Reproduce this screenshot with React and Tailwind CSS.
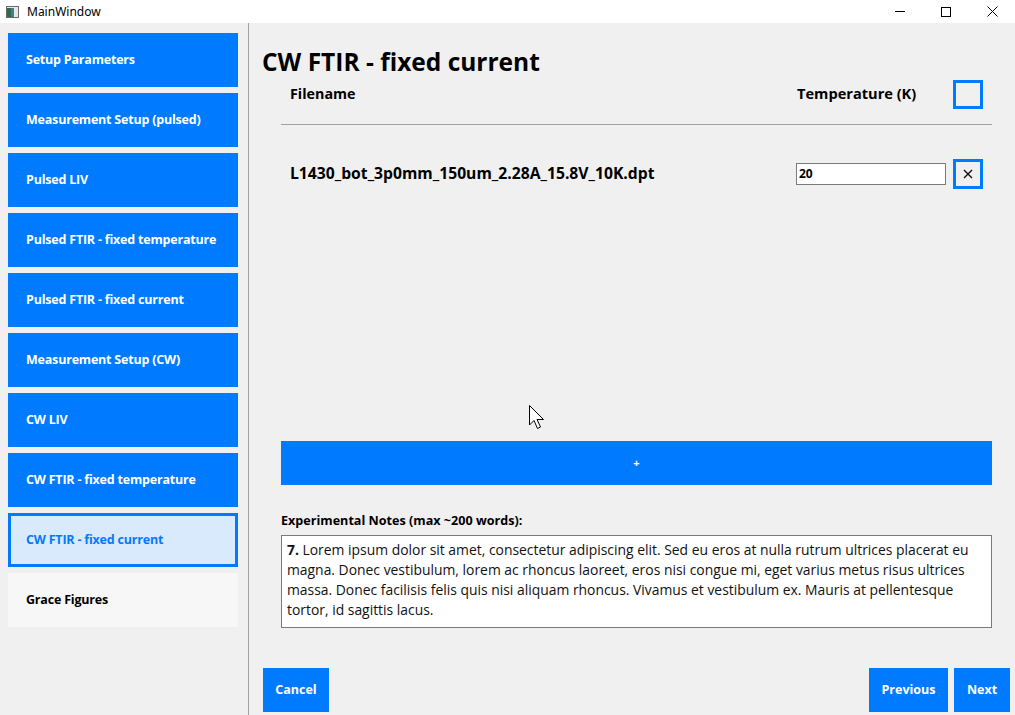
import React from "react";

const font = { fontFamily: '"Open Sans", "Noto Sans", sans-serif' };

const items = [
  "Setup Parameters",
  "Measurement Setup (pulsed)",
  "Pulsed LIV",
  "Pulsed FTIR - fixed temperature",
  "Pulsed FTIR - fixed current",
  "Measurement Setup (CW)",
  "CW LIV",
  "CW FTIR - fixed temperature",
];

function SideButton({ label }) {
  return (
    <div className="h-[54px] w-[230px] bg-[#007bff] flex items-center pl-[18px] text-white font-bold text-[12.5px] tracking-[-0.2px]">
      {label}
    </div>
  );
}

export default function App() {
  return (
    <div className="relative w-[1015px] h-[715px] bg-[#f0f0f0] flex flex-col overflow-hidden" style={font}>
      {/* title bar */}
      <div className="h-[23px] bg-white flex items-center shrink-0">
        <svg width="13" height="12" viewBox="0 0 13 12" className="ml-[6px]">
          <rect x="0.5" y="0.5" width="12" height="11" fill="#e8e8e8" stroke="#6b6b6b" />
          <rect x="1" y="2" width="7" height="9" fill="#3f7f8f" />
          <rect x="1" y="2" width="4" height="9" fill="#2e6b4a" />
        </svg>
        <span className="ml-[8px] text-[12px] text-black" style={{ fontFamily: '"Noto Sans", sans-serif' }}>MainWindow</span>
        <div className="ml-auto flex items-center h-full">
          <div className="w-[46px] h-full flex items-center justify-center">
            <div className="w-[10px] h-px bg-black" />
          </div>
          <div className="w-[46px] h-full flex items-center justify-center">
            <div className="w-[10px] h-[10px] border border-black" />
          </div>
          <div className="w-[46px] h-full flex items-center justify-center">
            <svg width="11" height="11" viewBox="0 0 11 11">
              <path d="M0.5 0.5 L10.5 10.5 M10.5 0.5 L0.5 10.5" stroke="black" strokeWidth="1" />
            </svg>
          </div>
        </div>
      </div>

      <div className="flex flex-1 min-h-0">
        {/* sidebar */}
        <div className="w-[249px] border-r border-[#a0a0a0] pt-[10px] pl-[8px] flex flex-col gap-[6px] shrink-0">
          {items.map((l) => (
            <SideButton key={l} label={l} />
          ))}
          <div className="h-[54px] w-[230px] bg-[#d9eafc] border-[3px] border-[#007bff] flex items-center pl-[15px] text-[#007bff] font-bold text-[12.5px] tracking-[-0.2px]">
            CW FTIR - fixed current
          </div>
          <div className="h-[54px] w-[230px] bg-[#f7f7f7] flex items-center pl-[18px] text-black font-bold text-[12.5px] tracking-[-0.2px]">
            Grace Figures
          </div>
        </div>

        {/* main */}
        <div className="flex-1 flex flex-col">
          <div className="mt-[23px] h-[32px] pl-[13px] flex items-center text-[24.5px] font-bold text-black">
            CW FTIR - fixed current
          </div>

          <div className="ml-[32px] mr-[23px] flex flex-col">
            {/* header */}
            <div className="h-[30px] flex items-center mt-[1px]">
              <div className="flex-1 pl-[9px] font-bold text-[14.3px] text-black">Filename</div>
              <div className="w-[150px] pl-[1px] font-bold text-[14.6px] text-black whitespace-nowrap">Temperature (K)</div>
              <div className="ml-[7px] w-[30px] h-[29px] border-[3px] border-[#007bff]" />
              <div className="w-[9px]" />
            </div>
            <div className="mt-[15px] h-px bg-[#a0a0a0]" />

            {/* file row */}
            <div className="mt-[34px] h-[30px] flex items-center">
              <div className="flex-1 pl-[9px] font-bold text-[15.7px] text-black whitespace-nowrap">
                L1430_bot_3p0mm_150um_2.28A_15.8V_10K.dpt
              </div>
              <div className="w-[150px] h-[22px] bg-white border border-[#7a7a7a] flex items-center pl-[2px] font-bold text-[12px] text-black">
                20
              </div>
              <div className="ml-[7px] w-[30px] h-[30px] border-[3px] border-[#007bff] flex items-center justify-center">
                <svg width="10" height="10" viewBox="0 0 10 10">
                  <path d="M1 1 L9 9 M9 1 L1 9" stroke="#111" strokeWidth="1.4" />
                </svg>
              </div>
              <div className="w-[9px]" />
            </div>

            {/* plus */}
            <div className="mt-[252px] h-[44px] bg-[#007bff] flex items-center justify-center text-white text-[11px] font-bold">
              +
            </div>

            <div className="mt-[28px] h-[16px] flex items-center font-bold text-[12.6px] text-black whitespace-nowrap">
              Experimental Notes (max ~200 words):
            </div>

            <div className="mt-[6px] h-[93px] bg-white border border-[#7a7a7a] pl-[5px] pr-[12px] pt-[4px] text-[13.9px] leading-[20px] text-[#111]">
              <span className="font-bold">7.</span> Lorem ipsum dolor sit amet, consectetur adipiscing elit. Sed eu eros at nulla rutrum ultrices placerat eu magna. Donec vestibulum, lorem ac rhoncus laoreet, eros nisi congue mi, eget varius metus risus ultrices massa. Donec facilisis felis quis nisi aliquam rhoncus. Vivamus et vestibulum ex. Mauris at pellentesque tortor, id sagittis lacus.
            </div>
          </div>

          {/* bottom buttons */}
          <div className="mt-[40px] h-[44px] flex pl-[14px] pr-[5px]">
            <div className="w-[66px] h-full bg-[#007bff] flex items-center justify-center text-white font-bold text-[12.5px]">
              Cancel
            </div>
            <div className="ml-auto w-[79px] h-full bg-[#007bff] flex items-center justify-center text-white font-bold text-[12.5px]">
              Previous
            </div>
            <div className="ml-[6px] w-[56px] h-full bg-[#007bff] flex items-center justify-center text-white font-bold text-[12.5px]">
              Next
            </div>
          </div>
        </div>
      </div>

      {/* mouse cursor */}
      <svg className="absolute left-[529px] top-[405px]" width="19" height="28" viewBox="0 0 19 28">
        <path d="M0.5 0.5 L0.5 20 L5 15.5 L8.5 23.5 L11.5 22 L8 14.5 L14.5 14.5 Z" fill="white" stroke="black" strokeWidth="1" strokeLinejoin="miter" />
      </svg>
    </div>
  );
}
